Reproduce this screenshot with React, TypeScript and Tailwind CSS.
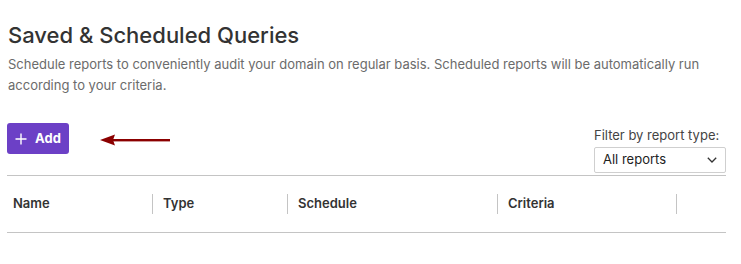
import React from "react";

export default function App() {
  const cols = [
    { label: "Name", w: "w-[145px]", pl: "pl-[6px]" },
    { label: "Type", w: "w-[135px]", pl: "pl-[10px]" },
    { label: "Schedule", w: "w-[210px]", pl: "pl-[10px]" },
    { label: "Criteria", w: "w-[179px]", pl: "pl-[10px]" },
  ];
  return (
    <div className="w-[741px] h-[264px] bg-white font-['Inter',sans-serif] pl-[7px] pr-[15px] pt-[21px]">
      <h1 className="text-[22px] leading-[28px] font-medium text-[#333333] ml-px">
        Saved &amp; Scheduled Queries
      </h1>
      <p className="mt-[5px] text-[13px] leading-[21px] text-[#6b6b6b] ml-px">
        Schedule reports to conveniently audit your domain on regular basis. Scheduled reports will be automatically run according to your criteria.
      </p>
      <div className="mt-[26px] flex items-start justify-between">
        <div className="flex items-center pt-[1px]">
          <button className="h-[31px] w-[62px] rounded-[3px] bg-[#6c40c6] text-white flex items-center justify-center gap-[8px] text-[13px] font-bold">
            <svg width="12" height="12" viewBox="0 0 12 12" fill="none" stroke="white" strokeWidth="1.4">
              <path d="M6 0.5v11M0.5 6h11" />
            </svg>
            <span>Add</span>
          </button>
          <svg className="ml-[31px] mt-[3px]" width="72" height="12" viewBox="0 0 72 12">
            <path d="M0 6 L15 0.5 L13 6 L15 11.5 Z" fill="#8b0000" />
            <rect x="13" y="5" width="57" height="2.4" fill="#8b0000" />
          </svg>
        </div>
        <div className="flex flex-col items-start">
          <label className="text-[13px] leading-[16px] text-[#444444] mt-[5px]">Filter by report type:</label>
          <div className="mt-[4px] w-[132px] h-[26px] border border-[#cfcfcf] rounded-[2px] flex items-center justify-between pl-[8px] pr-[8px] text-[13px] text-[#222222]">
            <span>All reports</span>
            <svg width="10" height="6" viewBox="0 0 10 6" fill="none" stroke="#333" strokeWidth="1.3">
              <path d="M0.8 0.8 L5 5 L9.2 0.8" />
            </svg>
          </div>
        </div>
      </div>
      <div className="mt-[2px] border-t border-[#c4c4c4] border-b h-[58px] flex items-center w-[719px]">
        {cols.map((c, i) => (
          <div
            key={c.label}
            className={`${c.w} ${c.pl} h-[20px] flex items-center text-[13px] font-semibold text-[#333333] ${i > 0 ? "border-l border-[#c4c4c4]" : ""}`}
          >
            {c.label}
          </div>
        ))}
        <div className="h-[20px] border-l border-[#c4c4c4]" />
      </div>
    </div>
  );
}
